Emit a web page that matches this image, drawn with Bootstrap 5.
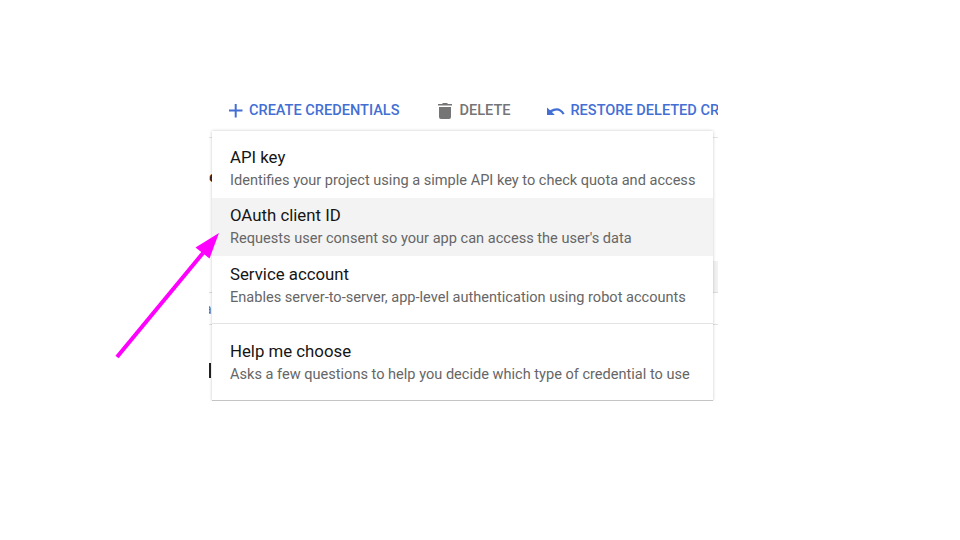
<!DOCTYPE html>
<html lang="en">
<head>
<meta charset="utf-8">
<meta name="viewport" content="width=device-width, initial-scale=1">
<title>Create credentials</title>
<link href="https://cdn.jsdelivr.net/npm/bootstrap@5.3.0/dist/css/bootstrap.min.css" rel="stylesheet">
<style>
body{font-family:Roboto,"Liberation Sans",sans-serif;background:#fff;width:960px;height:540px}
.console{width:509px;height:311px;margin:90px 0 0 209px}
.toolbar{height:47.5px;padding-left:20px;border-bottom:1px solid #e4e4e4}
.tool{font-size:14.56px;line-height:20px;font-weight:500;color:#436fd4;white-space:nowrap;padding-top:10px}
.tool-off{color:#757575;margin:0 37px 0 39px}
.icon-add{margin:3.5px 6px 0 0}
.icon-bin{margin:2.5px 7px 0 0}
.icon-undo{margin:6.5px 5px 0 0}
.menu-panel{left:3px;top:41px;width:501px;height:270px;background:#fff;box-shadow:0 0 3px rgba(0,0,0,.22);border-bottom:1px solid #c4c4c4;padding-top:8.5px}
.choice{height:58.3px;padding:6.5px 0 0 18px;white-space:nowrap}
.choice-title{font-size:16.8px;line-height:22px;color:#151515;margin-bottom:1px}
.choice-text{font-size:14.57px;line-height:22px;color:#666}
.choice-on{background:#f3f3f3}
.divide{border-top:1px solid #e4e4e4;margin:9px 0}
.behind-a{height:123px;font-size:14px;font-weight:700;padding-top:28px;line-height:22px;color:#222}
.behind-b{height:32px;background:linear-gradient(90deg,#fff 50%,#f1f1f1 50%);border-bottom:1px solid #dcdcdc}
.behind-c{height:32px;font-size:14px;line-height:32px;color:#666;border-bottom:1px solid #e0e0e0}
.behind-d{padding-top:38px}
.bar-mark{width:2px;height:15px;background:#222}
.peek{margin-left:-7px}
.peek-row{margin-left:-5px}
.pointer{left:100px;top:220px}
</style>
<script src="https://cdn.jsdelivr.net/npm/bootstrap@5.3.0/dist/js/bootstrap.bundle.min.js"></script>
</head>
<body class="position-relative overflow-hidden">
<div class="d-flex">
<main class="console position-relative overflow-hidden">
  <div class="toolbar d-flex align-items-start">
    <div class="tool d-flex align-items-start flex-shrink-0"><svg class="icon-add" width="14" height="14" viewBox="0 0 14 14"><path d="M6.700 0V13.400M0 6.500H13.500" fill="none" stroke="currentColor" stroke-width="2"/></svg><span>CREATE CREDENTIALS</span></div>
    <div class="tool tool-off d-flex align-items-start flex-shrink-0"><svg class="icon-bin" width="14" height="16" viewBox="0 0 14 16"><path d="M0 1h4l1-1h4l1 1h4v1.500H0zM1 4h12v10q0 2-2 2H3q-2 0-2-2z" fill="currentColor"/></svg><span>DELETE</span></div>
    <div class="tool d-flex align-items-start flex-shrink-0"><svg class="icon-undo" width="18" height="9" viewBox="0 0 18 9"><path d="M0 .5v7.500h7.800L4.900 5.100Q11.500 .8 15.700 7.500l1.900-.8Q12.500-2.300 3 3.300z" fill="currentColor"/></svg><span>RESTORE DELETED CREDENTIALS</span></div>
  </div>
  <div class="behind-a"><span class="peek">ce</span></div>
  <div class="behind-b"></div>
  <div class="behind-c"><span class="peek-row">a</span></div>
  <div class="behind-d"><div class="bar-mark"></div></div>
  <div class="menu-panel position-absolute">
    <div class="choice"><div class="choice-title">API key</div><div class="choice-text">Identifies your project using a simple API key to check quota and access</div></div>
    <div class="choice choice-on"><div class="choice-title">OAuth client ID</div><div class="choice-text">Requests user consent so your app can access the user's data</div></div>
    <div class="choice"><div class="choice-title">Service account</div><div class="choice-text">Enables server-to-server, app-level authentication using robot accounts</div></div>
    <div class="divide"></div>
    <div class="choice"><div class="choice-title">Help me choose</div><div class="choice-text">Asks a few questions to help you decide which type of credential to use</div></div>
  </div>
</main>
</div>
<svg class="pointer position-absolute" width="130" height="145" viewBox="0 0 130 145"><path d="M17 137L103 33" stroke="#f0f" stroke-width="4"/><path d="M119 13L95.500 27.500L109.500 38.500z" fill="#f0f"/></svg>
</body>
</html>
